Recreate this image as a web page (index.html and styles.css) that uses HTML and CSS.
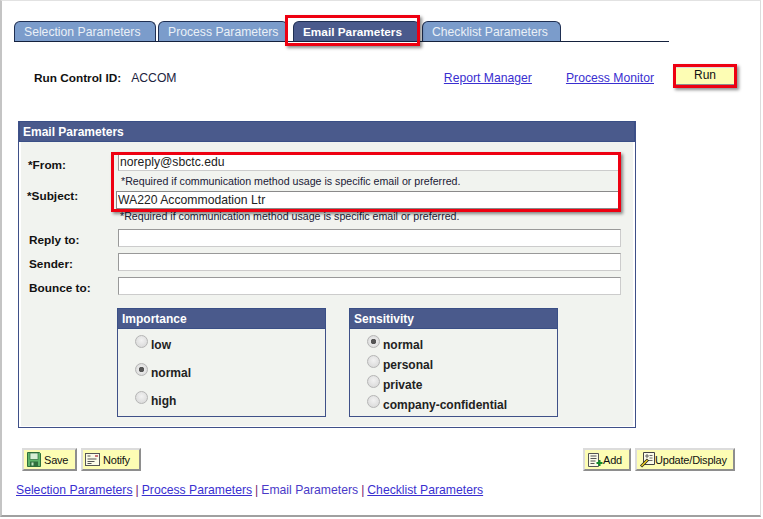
FILE: index.html
```html
<!DOCTYPE html>
<html lang="en">
<head>
<meta charset="utf-8">
<title>Email Parameters</title>
<link rel="stylesheet" href="styles.css">
</head>
<body>
<div class="page">
  <div class="tabs">
    <a class="tab t1">Selection Parameters</a>
    <a class="tab t2">Process Parameters</a>
    <a class="tab active">Email Parameters</a>
    <a class="tab t4">Checklist Parameters</a>
  </div>
  <div class="toprow">
    <span class="rc-label">Run Control ID:</span>
    <span class="rc-value">ACCOM</span>
    <a class="link rm">Report Manager</a>
    <a class="link pm">Process Monitor</a>
    <button class="btn run">Run</button>
  </div>
  <section class="panel">
    <h2 class="head">Email Parameters</h2>
    <div class="body">
      <div class="row"><label class="lbl from">*From:</label><input class="field" value="noreply@sbctc.edu" readonly></div>
      <div class="note n1">*Required if communication method usage is specific email or preferred.</div>
      <div class="row"><label class="lbl subj">*Subject:</label><input class="field sub" value="WA220 Accommodation Ltr" readonly></div>
      <div class="note n2">*Required if communication method usage is specific email or preferred.</div>
      <div class="row"><label class="lbl">Reply to:</label><input class="field" readonly></div>
      <div class="row gap"><label class="lbl">Sender:</label><input class="field" readonly></div>
      <div class="row gap"><label class="lbl">Bounce to:</label><input class="field" readonly></div>
      <div class="groups">
        <div class="group">
          <h3 class="ghead">Importance</h3>
          <div class="opts wide">
            <label class="opt"><input type="radio" name="imp"><span>low</span></label>
            <label class="opt"><input type="radio" name="imp" checked><span>normal</span></label>
            <label class="opt"><input type="radio" name="imp"><span>high</span></label>
          </div>
        </div>
        <div class="group">
          <h3 class="ghead">Sensitivity</h3>
          <div class="opts tight">
            <label class="opt"><input type="radio" name="sen" checked><span>normal</span></label>
            <label class="opt"><input type="radio" name="sen"><span>personal</span></label>
            <label class="opt"><input type="radio" name="sen"><span>private</span></label>
            <label class="opt"><input type="radio" name="sen"><span>company-confidential</span></label>
          </div>
        </div>
      </div>
    </div>
  </section>
  <div class="actions">
    <button class="btn save">
      <svg class="ico" width="14" height="15" viewBox="0 0 14 15"><path d="M.5.500h12l1 1v13H.5z" fill="#5fb56a" stroke="#2f6f3c"/><rect x="3" y="1" width="8" height="6.500" fill="#d8efd6" stroke="#2f6f3c" stroke-width=".7"/><rect x="3" y="9.500" width="8" height="5" fill="#2f6f3c"/><rect x="4.500" y="10.500" width="2" height="3" fill="#bfe3c0"/></svg><span>Save</span></button>
    <button class="btn notify">
      <svg class="ico" width="15" height="13" viewBox="0 0 15 13"><rect x=".5" y=".5" width="14" height="12" fill="#fbfbe8" stroke="#555"/><path d="M2.500 3h3M2.500 6h9M2.500 8.500h7M2.500 10.500h4" stroke="#555" fill="none"/><rect x="10" y="2" width="3" height="2" fill="#c77"/></svg><span>Notify</span></button>
    <span class="spacer"></span>
    <button class="btn add">
      <svg class="ico" width="15" height="14" viewBox="0 0 15 14"><path d="M.5.500h10v13H.5z" fill="#fbfbe8" stroke="#555"/><path d="M2.500 3h6M2.500 5.500h6M2.500 8h5M2.500 10.500h4" stroke="#555" fill="none"/><path d="M8.500 10h6M11.500 7v6" stroke="#138a2a" stroke-width="2" fill="none"/></svg><span>Add</span></button>
    <button class="btn update">
      <svg class="ico" width="15" height="16" viewBox="0 0 15 16"><path d="M3.500.500h11v12h-11z" fill="#fbfbe8" stroke="#444"/><path d="M6 3h2v2H6zM9.500 3.500h3M9.500 6h3M6 8.500h6.500" stroke="#444" fill="none" stroke-width=".8"/><path d="M1 14.500l7-7" stroke="#222" stroke-width="3"/><path d="M1.500 14l6-6" stroke="#f4d21f" stroke-width="1.500"/></svg><span>Update/Display</span></button>
  </div>
  <nav class="crumbs"><a class="link">Selection Parameters</a><span class="sep">|</span><a class="link">Process Parameters</a><span class="sep">|</span><span class="cur">Email Parameters</span><span class="sep">|</span><a class="link">Checklist Parameters</a></nav>
  <div class="mark m-tab"></div>
  <div class="mark m-run"></div>
  <div class="mark m-fields"></div>
</div>
</body>
</html>
```
FILE: styles.css
```css
* { box-sizing: border-box; }
html, body { margin: 0; padding: 0; background: #fff; }
body { font-family: "Liberation Sans", Arial, sans-serif; font-size: 12px; color: #111; }
.page {
  position: relative;
  width: 761px;
  height: 517px;
  border-left: 2px solid #c4c4c4;
  border-top: 1px solid #e2e2e2;
  border-bottom: 2px solid #a0a0a0;
  border-right: 1px solid #dcdcdc;
  overflow: hidden;
}
.tabs {
  display: flex;
  margin: 20px 0 0 12px;
  width: 655px;
  height: 21px;
  border-bottom: 1.500px solid #14213d;
}
.tab {
  height: 20px;
  line-height: 20px;
  padding-left: 9px;
  background: #7b9ccb;
  color: #eaf0f7;
  border: 1px solid #1f2f52;
  border-bottom: 0;
  border-radius: 6px 6px 0 0;
  font-size: 12.200px;
}
.t1 { width: 142px; margin-right: 2px; }
.t2 { width: 130px; margin-right: 5px; }
.active { width: 127px; margin-right: 2px; background: #4a5a8c; color: #fff; font-weight: bold; font-size: 11.800px; }
.t4 { width: 139px; }
.toprow { display: flex; align-items: center; height: 20px; margin-top: 24px; padding-right: 24px; }
.rc-label { margin: 4px 0 0 32px; font-weight: bold; font-size: 11.800px; }
.rc-value { margin: 4px 0 0 10px; font-size: 12.200px; color: #1c2340; }
.link { color: #3a2fd0; text-decoration: underline; font-size: 12.200px; }
.toprow .link { margin-top: 4px; }
.rm { margin-left: auto; }
.pm { margin-left: 34px; }
.btn {
  display: inline-flex;
  align-items: center;
  height: 23px;
  padding: 0;
  background: #fdfdb4;
  color: #111;
  font: 11px "Liberation Sans", Arial, sans-serif;
  letter-spacing: -.2px;
  border: 2px solid;
  border-color: #dcdcdc #8e8e8e #8e8e8e #dcdcdc;
}
.run { margin-left: 20px; width: 62px; height: 20px; justify-content: center; padding-bottom: 3px; font-size: 12px; letter-spacing: 0; }
.panel {
  margin: 35px 0 0 16px;
  width: 618px;
  height: 307px;
  border: 1px solid #3f5088;
  border-top: 0;
  background: #fff;
  padding: 0 2px 2px;
}
.head {
  margin: 0 -2px;
  height: 21px;
  line-height: 20px;
  padding-left: 3px;
  background: #4a5a8c;
  border: 1px solid #3a4f86;
  color: #fff;
  font-size: 12px;
  font-weight: bold;
}
.body { background: #f1f3ef; height: 284px; padding-top: 11px; }
.row { display: flex; align-items: center; height: 18px; }
.gap { margin-top: 6px; }
.lbl { width: 89px; margin-left: 8px; padding-top: 4px; font-size: 11.800px; font-weight: bold; flex: none; }
.from { margin-left: 7px; width: 90px; padding-top: 6px; }
.subj { margin-left: 6px; width: 89px; padding: 0 0 8px; }
.field {
  width: 503px;
  height: 18px;
  padding: 0 1px;
  margin: 0;
  background: #fff;
  border: 1px solid;
  border-width: 1.500px 1px 1px 1px;
  border-color: #999 #ccc #ccc #999;
  font: 12.200px "Liberation Sans", Arial, sans-serif;
  color: #222;
  outline: none;
}
.sub { border-color: #8a8a8a; }
.note { height: 20px; font-size: 10.650px; color: #1a2036; padding-left: 100px; }
.n1 { line-height: 21px; }
.n2 { line-height: 15px; padding-left: 99px; }
.groups { display: flex; gap: 23px; margin: 13px 0 0 96px; }
.group { width: 209px; height: 109px; border: 1px solid #3f5088; }
.ghead {
  margin: -1px;
  height: 21px;
  line-height: 20px;
  padding-left: 4px;
  background: #4a5a8c;
  border: 1px solid #3a4f86;
  color: #fff;
  font-size: 12px;
  font-weight: bold;
}
.opts { display: flex; flex-direction: column; padding-left: 17px; }
.wide { padding-top: 5px; gap: 8px; }
.tight { padding-top: 5px; gap: 0; }
.opt { display: flex; align-items: center; height: 20px; font-size: 12px; font-weight: bold; color: #222; }
.opt span { padding-top: 4px; }
.opt input {
  appearance: none;
  -webkit-appearance: none;
  width: 13px;
  height: 13px;
  margin: 0 3px 4px 0;
  border: 1px solid #b5b5b5;
  border-radius: 50%;
  background: radial-gradient(circle at 50% 40%, #f2f2f2, #d5d5d5);
}
.opt input:checked { background: radial-gradient(circle, #555 0 2.500px, #e8e8e8 3px, #d5d5d5); }
.actions { display: flex; margin: 20px 0 0 20px; width: 713px; gap: 4px; }
.spacer { flex: 1; }
.ico { flex: none; }
.save { width: 55px; padding-left: 3px; gap: 3px; }
.notify { width: 60px; padding-left: 2px; gap: 3px; }
.add { width: 48px; padding-left: 3px; gap: 0; }
.update { width: 100px; padding-left: 3px; gap: 0; }
.crumbs { margin: 12px 0 0 14px; height: 14px; line-height: 14px; font-size: 12.200px; color: #7a1a70; }
.sep { margin: 0 3px; }
.cur { color: #4a3ac8; }
.mark { position: absolute; border: 3px solid #ee0011; box-shadow: 2px 2px 3px rgba(0,0,0,.45); pointer-events: none; }
.m-tab { left: 283px; top: 14px; width: 135px; height: 31px; }
.m-run { left: 671px; top: 63px; width: 64px; height: 24px; }
.m-fields { left: 109px; top: 151px; width: 510px; height: 60px; }
```
